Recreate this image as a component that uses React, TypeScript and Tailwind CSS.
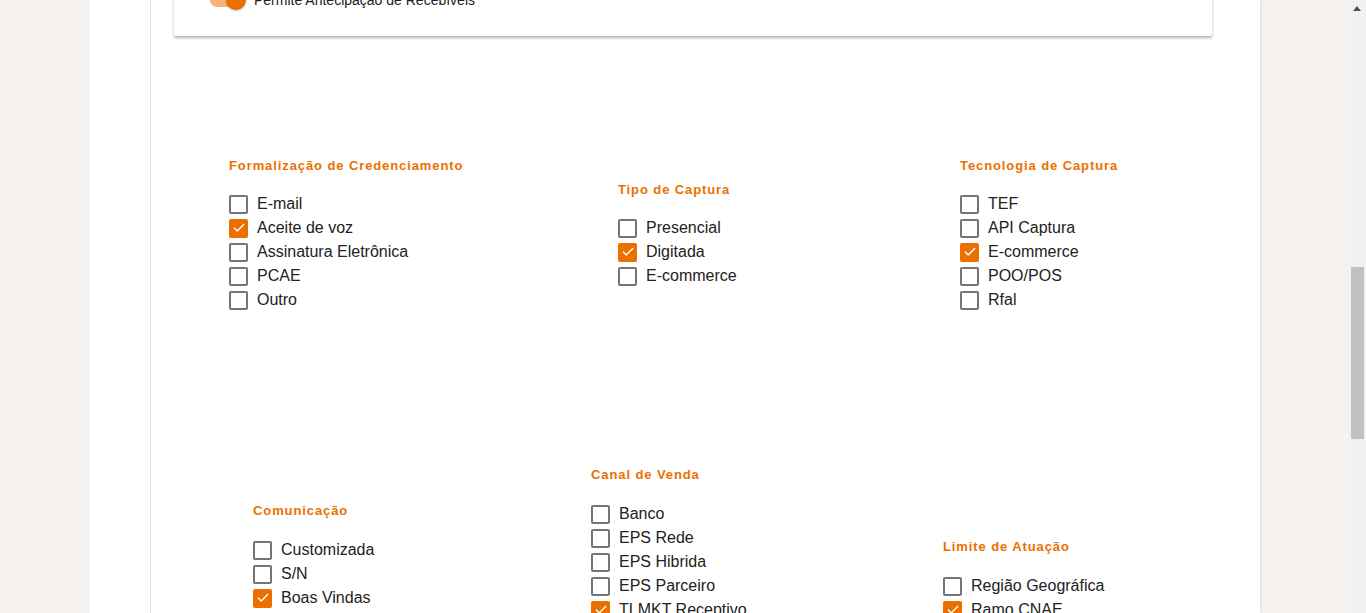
import { Check } from 'lucide-react';

type Item = { label: string; checked?: boolean };
type Group = { title: string; items: Item[] };

const row1: Group[] = [
  {
    title: 'Formalização de Credenciamento',
    items: [
      { label: 'E-mail' },
      { label: 'Aceite de voz', checked: true },
      { label: 'Assinatura Eletrônica' },
      { label: 'PCAE' },
      { label: 'Outro' },
    ],
  },
  {
    title: 'Tipo de Captura',
    items: [{ label: 'Presencial' }, { label: 'Digitada', checked: true }, { label: 'E-commerce' }],
  },
  {
    title: 'Tecnologia de Captura',
    items: [
      { label: 'TEF' },
      { label: 'API Captura' },
      { label: 'E-commerce', checked: true },
      { label: 'POO/POS' },
      { label: 'Rfal' },
    ],
  },
];

const row2: Group[] = [
  {
    title: 'Comunicação',
    items: [
      { label: 'Customizada' },
      { label: 'S/N' },
      { label: 'Boas Vindas', checked: true },
      { label: 'Padrão' },
      { label: 'Outro' },
    ],
  },
  {
    title: 'Canal de Venda',
    items: [
      { label: 'Banco' },
      { label: 'EPS Rede' },
      { label: 'EPS Hibrida' },
      { label: 'EPS Parceiro' },
      { label: 'TLMKT Receptivo', checked: true },
      { label: 'TLMKT Ativo' },
      { label: 'Web' },
      { label: 'Outro' },
    ],
  },
  {
    title: 'Limite de Atuação',
    items: [{ label: 'Região Geográfica' }, { label: 'Ramo CNAE', checked: true }],
  },
];

function CheckRow({ item }: { item: Item }) {
  return (
    <label className="flex h-6 items-center gap-[9px]">
      {item.checked ? (
        <span className="flex h-[19px] w-[19px] items-center justify-center rounded-[2px] bg-[#ec7000]">
          <Check className="h-[14px] w-[14px] text-white" strokeWidth={2.5} />
        </span>
      ) : (
        <span className="h-[19px] w-[19px] rounded-[2px] border-2 border-[#747474]" />
      )}
      <span className="text-[16px] leading-6 text-[#222]">{item.label}</span>
    </label>
  );
}

function CheckGroup({ group, tight }: { group: Group; tight?: boolean }) {
  return (
    <div className="flex flex-col">
      <h3
        className={
          (tight ? 'mb-[18px] ' : 'mb-[19px] ') +
          'text-[13px] leading-4 font-bold tracking-[0.9px] text-[#ec7000]'
        }
      >
        {group.title}
      </h3>
      {group.items.map((it) => (
        <CheckRow key={it.label} item={it} />
      ))}
    </div>
  );
}

export default function App() {
  return (
    <div
      className="flex h-[613px] w-full overflow-hidden bg-[#f5f2ef]"
      style={{ fontFamily: '"Liberation Sans", Arial, sans-serif' }}
    >
      <div className="ml-[90px] flex h-full w-[1170px] bg-white shadow-[1px_0_2px_rgba(0,0,0,0.08)]">
        <div className="w-[60px] shrink-0" />
        <div className="flex-1 border-l border-[#e4e4e4]">
          <div className="ml-[23px] mr-[48px] mt-[-40px] rounded-[2px] bg-white pt-[30px] pb-[26px] pl-[36px] shadow-[0_2px_3px_rgba(0,0,0,0.3)]">
            <div className="flex h-5 items-center gap-2">
              <div className="relative h-5 w-[36px]">
                <div className="absolute top-[3px] left-0 h-[14px] w-[34px] rounded-full bg-[#f5b47c]" />
                <div className="absolute top-0 right-0 h-5 w-5 rounded-full bg-[#ec7000] shadow-[0_1px_2px_rgba(0,0,0,0.25)]" />
              </div>
              <span className="text-[14px] text-[#212121]">Permite Antecipação de Recebíveis</span>
            </div>
          </div>

          <div className="mt-[122px] ml-[78px] grid grid-cols-[389px_342px_1fr] items-center">
            {row1.map((g) => (
              <CheckGroup key={g.title} group={g} tight />
            ))}
          </div>

          <div className="mt-[155px] ml-[102px] grid grid-cols-[338px_352px_1fr] items-center">
            {row2.map((g) => (
              <CheckGroup key={g.title} group={g} />
            ))}
          </div>
        </div>
      </div>

      <div className="flex-1" />

      <div className="relative h-full w-[17px] bg-[#f1f1f1]">
        <div className="absolute top-[6px] left-[4px] h-0 w-0 border-x-[4px] border-b-[5px] border-x-transparent border-b-[#505050]" />
        <div className="absolute top-[267px] left-[2px] h-[172px] w-[13px] bg-[#c1c1c1]" />
      </div>
    </div>
  );
}
